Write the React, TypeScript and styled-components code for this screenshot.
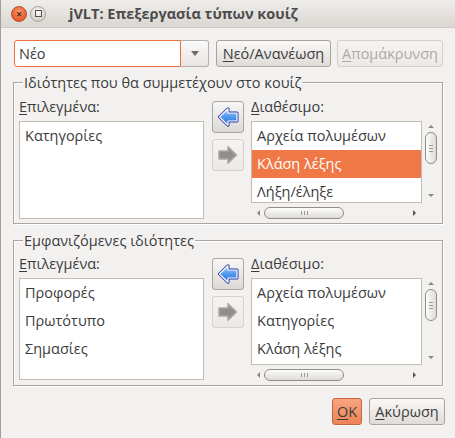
import React from "react";
import styled, { createGlobalStyle } from "styled-components";

const Global = createGlobalStyle`
  html, body { margin: 0; padding: 0; background: #f2f1f0; }
  body { font-family: "Open Sans", "DejaVu Sans", sans-serif; }
  * { box-sizing: border-box; }
`;

const FONT = `"Open Sans", "DejaVu Sans", sans-serif`;
const TEXT = "#3c3c3c";

const Window = styled.div`
  width: 455px;
  height: 438px;
  background: #f2f1f0;
  display: flex;
  flex-direction: column;
  overflow: hidden;
  border-left: 1px solid #a39e98;
  font-family: ${FONT};
  font-size: 14.5px;
  color: ${TEXT};
`;

const TitleBar = styled.div`
  height: 28px;
  flex: none;
  display: flex;
  align-items: center;
  padding-left: 10px;
  background: linear-gradient(#efedea, #dad7d2);
  border-bottom: 1px solid #cdc9c3;
`;

const WinButton = styled.div<{ $kind: "close" | "max" }>`
  width: 16px;
  height: 16px;
  border-radius: 50%;
  margin-right: 3px;
  display: flex;
  align-items: center;
  justify-content: center;
  border: 1px solid ${(p) => (p.$kind === "close" ? "#b8512b" : "#a9a59f")};
  background: ${(p) =>
    p.$kind === "close"
      ? "radial-gradient(circle at 50% 35%, #f89a72, #e85a2a 70%)"
      : "radial-gradient(circle at 50% 35%, #fbfaf9, #d4d1cc 75%)"};
  font-size: 10px;
  font-weight: bold;
  color: #5a2614;
  line-height: 1;
`;

const MaxBox = styled.div`
  width: 7px;
  height: 7px;
  border: 1px solid #55524e;
`;

const Title = styled.div`
  margin-left: 20px;
  font-weight: bold;
  font-size: 14.5px;
  color: #4c4c4c;
`;

const Content = styled.div`
  flex: 1;
  display: flex;
  flex-direction: column;
  padding: 12px 12px 0 12px;
`;

const TopRow = styled.div`
  display: flex;
  align-items: center;
  height: 26px;
  padding-left: 1px;
`;

const Combo = styled.div`
  width: 196px;
  height: 27px;
  display: flex;
  margin-right: 7px;
`;

const ComboInput = styled.div`
  flex: 1;
  background: #fff;
  border: 1px solid #e8703e;
  border-radius: 3px 0 0 3px;
  padding-left: 4px;
  display: flex;
  align-items: center;
`;

const ComboArrow = styled.div`
  width: 28px;
  border: 1px solid #b3afa9;
  border-left: none;
  border-radius: 0 3px 3px 0;
  background: linear-gradient(#fbfafa, #e7e4e1);
  display: flex;
  align-items: center;
  justify-content: center;
  &::after {
    content: "";
    border-left: 4px solid transparent;
    border-right: 4px solid transparent;
    border-top: 5px solid #6f6c68;
  }
`;

const Button = styled.div<{ $w: number; $ml?: number; $disabled?: boolean; $primary?: boolean }>`
  width: ${(p) => p.$w}px;
  margin-left: ${(p) => p.$ml ?? 0}px;
  height: 27px;
  flex: none;
  border-radius: 3px;
  display: flex;
  align-items: center;
  justify-content: center;
  white-space: nowrap;
  border: 1px solid
    ${(p) => (p.$primary ? "#c8643a" : p.$disabled ? "#d3cfca" : "#a7a39d")};
  background: ${(p) =>
    p.$primary
      ? "linear-gradient(#f7a581, #ee8358)"
      : p.$disabled
      ? "linear-gradient(#f5f4f3, #eceae7)"
      : "linear-gradient(#faf9f8, #dfdcd8)"};
  color: ${(p) => (p.$disabled ? "#aeaaa5" : TEXT)};
  box-shadow: ${(p) => (p.$disabled ? "none" : "0 1px 0 rgba(255,255,255,0.6)")};
`;

const U = styled.span`
  text-decoration: underline;
  text-underline-offset: 2px;
`;

const Group = styled.fieldset<{ $top: number; $pt: number }>`
  margin: ${(p) => p.$top}px 0 0 0;
  padding: ${(p) => p.$pt}px 5px 4px 5px;
  border: 1px solid #a9a6a1;
  border-radius: 0;
  min-width: 0;
  box-shadow: inset 1px 1px 0 #fff, 1px 1px 0 #fff;
`;

const Legend = styled.legend`
  padding: 0 1px;
  margin-left: 4px;
  line-height: 15px;
`;

const Columns = styled.div`
  display: flex;
`;

const Column = styled.div<{ $w: number; $ml: number }>`
  width: ${(p) => p.$w}px;
  margin-left: ${(p) => p.$ml}px;
  display: flex;
  flex-direction: column;
`;

const Label = styled.div`
  height: 20px;
  line-height: 20px;
  margin-bottom: 4px;
`;

const ListBox = styled.div<{ $h: number; $w?: number }>`
  height: ${(p) => p.$h}px;
  width: ${(p) => (p.$w ? `${p.$w}px` : "auto")};
  background: #fff;
  border: 1px solid #c3bcb3;
  overflow: hidden;
`;

const Item = styled.div<{ $selected?: boolean }>`
  height: 28px;
  line-height: 28px;
  padding-left: 5px;
  white-space: nowrap;
  background: ${(p) => (p.$selected ? "#f07746" : "transparent")};
  color: ${(p) => (p.$selected ? "#fff" : TEXT)};
`;

const ArrowCol = styled.div`
  width: 32px;
  margin-left: 8px;
  padding-top: 4px;
  display: flex;
  flex-direction: column;
  gap: 6px;
`;

const ArrowButton = styled.div<{ $disabled?: boolean }>`
  width: 32px;
  height: 32px;
  border-radius: 3px;
  display: flex;
  align-items: center;
  justify-content: center;
  border: 1px solid ${(p) => (p.$disabled ? "#d5d1cc" : "#aaa6a0")};
  background: ${(p) =>
    p.$disabled ? "linear-gradient(#f5f4f3, #ebe9e6)" : "linear-gradient(#f8f7f6, #dcd9d5)"};
`;

const ListRow = styled.div`
  display: flex;
`;

const VScroll = styled.div<{ $h: number }>`
  width: 15px;
  height: ${(p) => p.$h}px;
  display: flex;
  flex-direction: column;
  align-items: center;
  padding: 4px 0 4px 3px;
`;

const TriUp = styled.div`
  border-left: 3px solid transparent;
  border-right: 3px solid transparent;
  border-bottom: 3px solid #8a8782;
  margin-bottom: 4px;
`;

const TriDown = styled.div`
  border-left: 3px solid transparent;
  border-right: 3px solid transparent;
  border-top: 3px solid #8a8782;
  margin-top: auto;
  margin-bottom: 2px;
`;

const VThumb = styled.div`
  width: 12px;
  height: 32px;
  border: 1px solid #918d88;
  border-radius: 6px;
  background: linear-gradient(90deg, #fdfdfc, #dedbd7);
  display: flex;
  flex-direction: column;
  align-items: center;
  justify-content: center;
  gap: 2px;
  & > i {
    display: block;
    width: 4px;
    height: 1px;
    background: #9d9a95;
  }
`;

const HScroll = styled.div`
  width: 171px;
  height: 16px;
  display: flex;
  align-items: center;
  padding: 3px 6px 0 6px;
`;

const TriLeft = styled.div`
  border-top: 3px solid transparent;
  border-bottom: 3px solid transparent;
  border-right: 3px solid #8a8782;
  margin-right: 4px;
`;

const TriRight = styled.div`
  border-top: 3px solid transparent;
  border-bottom: 3px solid transparent;
  border-left: 3px solid #55524e;
  margin-left: auto;
`;

const HThumb = styled.div`
  width: 80px;
  height: 12px;
  border: 1px solid #918d88;
  border-radius: 6px;
  background: linear-gradient(#fdfdfc, #dedbd7);
  display: flex;
  align-items: center;
  justify-content: center;
  gap: 2px;
  & > i {
    display: block;
    width: 1px;
    height: 4px;
    background: #9d9a95;
  }
`;

const Footer = styled.div`
  display: flex;
  justify-content: flex-end;
  gap: 7px;
  margin-top: 12px;
  margin-right: -2px;
`;

const ARROW_L = "2.5,10 11,1.8 11,6 20,6 20,14 11,14 11,18.2";
const ARROW_R = "19.5,10 11,1.8 11,6 2,6 2,14 11,14 11,18.2";

const LeftArrowIcon = () => (
  <svg width="22" height="20" viewBox="0 0 22 20">
    <defs>
      <linearGradient id="blueG" x1="0" y1="0" x2="0" y2="1">
        <stop offset="0" stopColor="#a9d3fb" />
        <stop offset="0.5" stopColor="#4f98ee" />
        <stop offset="1" stopColor="#2a6fd6" />
      </linearGradient>
    </defs>
    <polygon points={ARROW_L} fill="none" stroke="#2632a8" strokeWidth="3" strokeLinejoin="round" />
    <polygon points={ARROW_L} fill="url(#blueG)" stroke="#ffffff" strokeWidth="1.2" strokeLinejoin="round" />
  </svg>
);

const RightArrowIcon = () => (
  <svg width="22" height="20" viewBox="0 0 22 20">
    <polygon points={ARROW_R} fill="#8f8e8c" stroke="#aaa9a7" strokeWidth="1.6" strokeLinejoin="round" />
  </svg>
);

const Scrollbars = ({ h }: { h: number }) => (
  <VScroll $h={h}>
    <TriUp />
    <VThumb>
      <i />
      <i />
      <i />
    </VThumb>
    <TriDown />
  </VScroll>
);

const HBar = () => (
  <HScroll>
    <TriLeft />
    <HThumb>
      <i />
      <i />
      <i />
    </HThumb>
    <TriRight />
  </HScroll>
);

type GroupProps = {
  title: string;
  top: number;
  pt: number;
  leftItems: string[];
  rightItems: string[];
  selected?: number;
  leftH: number;
  rightH: number;
};

const PropertyGroup = ({ title, top, pt, leftItems, rightItems, selected, leftH, rightH }: GroupProps) => (
  <Group $top={top} $pt={pt}>
    <Legend>{title}</Legend>
    <Columns>
      <Column $w={186} $ml={0}>
        <Label>
          <U>Ε</U>πιλεγμένα:
        </Label>
        <ListBox $h={leftH}>
          {leftItems.map((t) => (
            <Item key={t}>{t}</Item>
          ))}
        </ListBox>
      </Column>
      <ArrowCol>
        <ArrowButton>
          <LeftArrowIcon />
        </ArrowButton>
        <ArrowButton $disabled>
          <RightArrowIcon />
        </ArrowButton>
      </ArrowCol>
      <Column $w={186} $ml={7}>
        <Label>
          <U>Δ</U>ιαθέσιμο:
        </Label>
        <ListRow>
          <ListBox $h={rightH} $w={171}>
            {rightItems.map((t, i) => (
              <Item key={t} $selected={i === selected}>
                {t}
              </Item>
            ))}
          </ListBox>
          <Scrollbars h={rightH} />
        </ListRow>
        <HBar />
      </Column>
    </Columns>
  </Group>
);

export default function App() {
  return (
    <>
      <Global />
      <Window>
        <TitleBar>
          <WinButton $kind="close">×</WinButton>
          <WinButton $kind="max">
            <MaxBox />
          </WinButton>
          <Title>jVLT: Επεξεργασία τύπων κουίζ</Title>
        </TitleBar>
        <Content>
          <TopRow>
            <Combo>
              <ComboInput>Νέο</ComboInput>
              <ComboArrow />
            </Combo>
            <Button $w={115}>
              <U>Ν</U>εό/Ανανέωση
            </Button>
            <Button $w={106} $ml={6} $disabled>
              <U>Α</U>πομάκρυνση
            </Button>
          </TopRow>
          <PropertyGroup
            title="Ιδιότητες που θα συμμετέχουν στο κουίζ"
            top={9}
            pt={7}
            leftItems={["Κατηγορίες"]}
            rightItems={["Αρχεία πολυμέσων", "Κλάση λέξης", "Λήξη/έληξε"]}
            selected={1}
            leftH={98}
            rightH={82}
          />
          <PropertyGroup
            title="Εμφανιζόμενες ιδιότητες"
            top={9}
            pt={6}
            leftItems={["Προφορές", "Πρωτότυπο", "Σημασίες"]}
            rightItems={["Αρχεία πολυμέσων", "Κατηγορίες", "Κλάση λέξης"]}
            leftH={102}
            rightH={87}
          />
          <Footer>
            <Button $w={30} $primary>
              <U>O</U>K
            </Button>
            <Button $w={76}>
              <U>Α</U>κύρωση
            </Button>
          </Footer>
        </Content>
      </Window>
    </>
  );
}
